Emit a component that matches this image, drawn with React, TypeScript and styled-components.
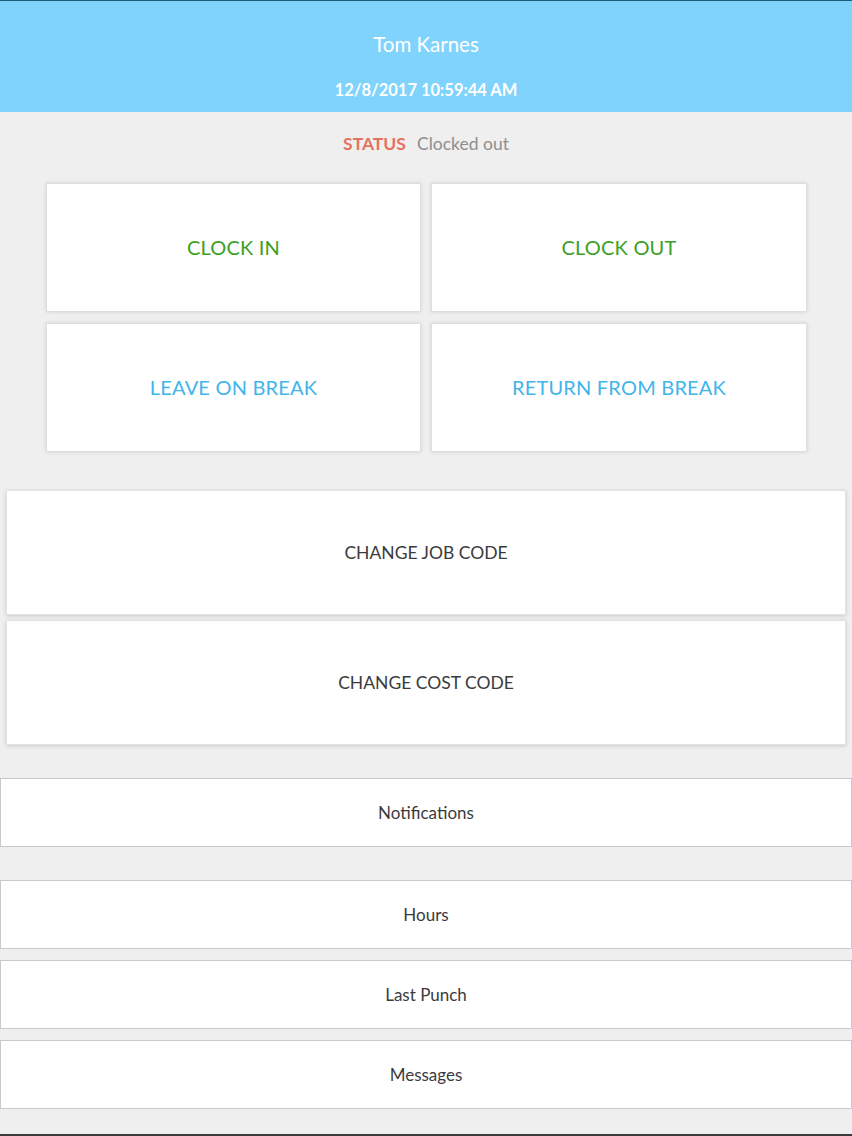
import React from "react";
import styled, { createGlobalStyle } from "styled-components";

const Global = createGlobalStyle`
  html, body { margin: 0; padding: 0; }
  body {
    background: #efeff0;
    font-family: Lato, "Open Sans", "Liberation Sans", sans-serif;
  }
`;

const Page = styled.div`
  width: 852px;
  height: 1136px;
  display: flex;
  flex-direction: column;
  background: #efeff0;
  border-bottom: 2px solid #3a3a3c;
  box-sizing: border-box;
`;

const Header = styled.header`
  height: 112px;
  box-sizing: border-box;
  border-top: 1px solid #1d5e77;
  background: #80d3fd;
  color: #ffffff;
  display: flex;
  flex-direction: column;
  align-items: center;
  padding-top: 31px;
`;

const Name = styled.div`
  font-size: 20.5px;
  line-height: 24px;
`;

const DateLine = styled.div`
  margin-top: 24px;
  font-size: 16.5px;
  font-weight: 700;
  line-height: 20px;
`;

const StatusRow = styled.div`
  display: flex;
  justify-content: center;
  align-items: baseline;
  gap: 11px;
  margin-top: 21px;
  height: 22px;
  line-height: 22px;
`;

const StatusLabel = styled.span`
  color: #e5735f;
  font-weight: 700;
  font-size: 17.5px;
`;

const StatusValue = styled.span`
  color: #8e8e8e;
  font-size: 17.5px;
`;

const ActionGrid = styled.div`
  display: grid;
  grid-template-columns: 375px 376px;
  grid-auto-rows: 129px;
  column-gap: 10px;
  row-gap: 11px;
  margin: 28px 0 0 46px;
`;

const Tile = styled.button<{ $tone: "green" | "blue" }>`
  border: 1px solid #dedee0;
  background: #ffffff;
  box-shadow: 0 0 4px rgba(0, 0, 0, 0.12);
  font-family: inherit;
  font-size: 20px;
  color: ${(p) => (p.$tone === "green" ? "#3aa01f" : "#3fb5ea")};
  letter-spacing: 0.2px;
  padding: 0 0 2px 0;
  cursor: pointer;
`;

const CodeStack = styled.div`
  display: flex;
  flex-direction: column;
  gap: 5px;
  margin: 38px 6px 0 6px;
`;

const CodeButton = styled.button`
  height: 125px;
  border: 1px solid #e2e2e4;
  background: #ffffff;
  box-shadow: 0 1px 4px rgba(0, 0, 0, 0.16);
  font-family: inherit;
  font-size: 17.5px;
  color: #3b3b3e;
  padding: 0;
  cursor: pointer;
`;

const ListGroup = styled.div<{ $top: number }>`
  display: flex;
  flex-direction: column;
  gap: 11px;
  margin-top: ${(p) => p.$top}px;
`;

const ListButton = styled.button`
  height: 69px;
  box-sizing: border-box;
  border: 1px solid #c9c9cb;
  background: #ffffff;
  font-family: inherit;
  font-size: 17px;
  color: #3b3b3e;
  padding: 0;
  cursor: pointer;
`;

export default function App() {
  return (
    <Page>
      <Global />
      <Header>
        <Name>Tom Karnes</Name>
        <DateLine>12/8/2017 10:59:44 AM</DateLine>
      </Header>
      <StatusRow>
        <StatusLabel>STATUS</StatusLabel>
        <StatusValue>Clocked out</StatusValue>
      </StatusRow>
      <ActionGrid>
        <Tile $tone="green">CLOCK IN</Tile>
        <Tile $tone="green">CLOCK OUT</Tile>
        <Tile $tone="blue">LEAVE ON BREAK</Tile>
        <Tile $tone="blue">RETURN FROM BREAK</Tile>
      </ActionGrid>
      <CodeStack>
        <CodeButton>CHANGE JOB CODE</CodeButton>
        <CodeButton>CHANGE COST CODE</CodeButton>
      </CodeStack>
      <ListGroup $top={33}>
        <ListButton>Notifications</ListButton>
      </ListGroup>
      <ListGroup $top={33}>
        <ListButton>Hours</ListButton>
        <ListButton>Last Punch</ListButton>
        <ListButton>Messages</ListButton>
      </ListGroup>
    </Page>
  );
}
